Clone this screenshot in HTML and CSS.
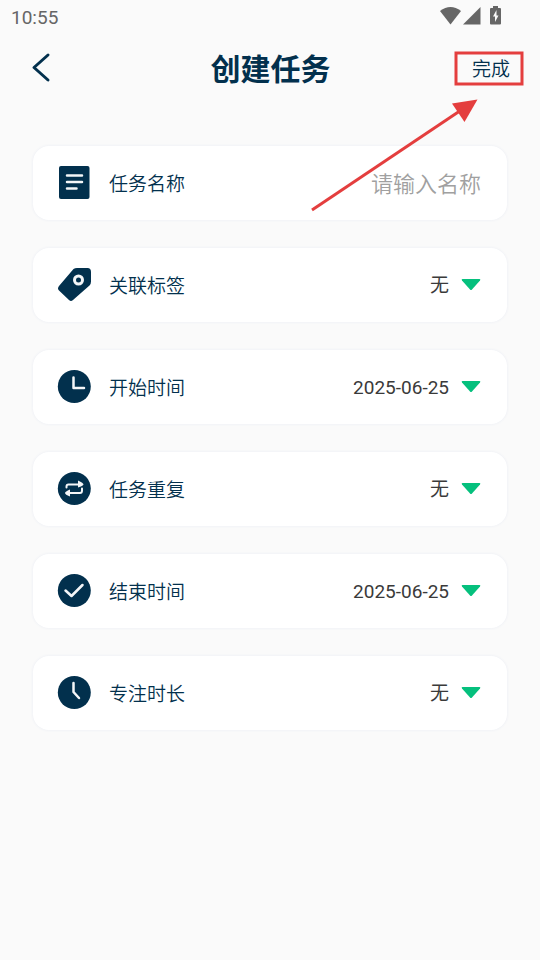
FILE: index.html
```html
<!DOCTYPE html>
<html lang="zh-CN">
<head>
<meta charset="utf-8">
<meta name="viewport" content="width=device-width, initial-scale=1">
<title>创建任务</title>
<link rel="stylesheet" href="styles.css">
</head>
<body>
<div class="status">
  <span>10:55</span>
  <svg class="status-icons" width="62" height="20" viewBox="0 0 62 20" aria-hidden="true">
    <path d="M0 4Q10.500-4 21 4L10.500 17.500Z"/>
    <path d="M23 17.500L40.500 0V17.500Z"/>
    <path d="M51 1h2V-1h5v2h2q1 0 1 1v14.500q0 1-1 1h-9q-1 0-1-1V2q0-1 1-1z"/>
    <path class="bolt" d="M56.500 3L53 9.500h2V15l3.500-6.500h-2z"/>
  </svg>
</div>
<header class="header">
  <button class="back" type="button" aria-label="返回">
    <svg width="20" height="30" viewBox="0 0 20 30"><path d="M17 2L3 14.500L17 27"/></svg>
  </button>
  <h1>创建任务</h1>
  <button class="done" type="submit" form="task">完成</button>
</header>
<form class="cards" id="task">
  <div class="card">
    <svg class="icon" viewBox="0 0 34 34"><rect x="2" y="0" width="30.500" height="33" rx="2"/><path class="line" d="M10 9.500h15M10 16h15M10 22.500h9.500"/></svg>
    <label for="name">任务名称</label>
    <input id="name" type="text" placeholder="请输入名称">
  </div>
  <div class="card">
    <svg class="icon" viewBox="0 0 34 34"><path d="M16.500 1Q18 0 20 0H30.500Q34 0 34 4V13.500Q34 16 32.500 17.500L16 32Q14 34 12 32L2 22.500Q0 20.500 2 18Z"/><circle class="ring" cx="21.500" cy="12" r="4"/></svg>
    <label for="tag">关联标签</label>
    <select id="tag"><option>无</option></select>
    <svg class="caret" viewBox="0 0 20 12"><path d="M1.500 0H18.500Q20 .2 19 1.500L11 10.500Q10 11.500 9 10.500L1 1.500Q0 .2 1.500 0Z"/></svg>
  </div>
  <div class="card">
    <svg class="icon" viewBox="0 0 34 34"><circle cx="17.300" cy="16.500" r="16.500"/><path class="line" d="M16.500 7.500V18H27"/></svg>
    <label for="start">开始时间</label>
    <select id="start"><option>2025-06-25</option></select>
    <svg class="caret" viewBox="0 0 20 12"><path d="M1.500 0H18.500Q20 .2 19 1.500L11 10.500Q10 11.500 9 10.500L1 1.500Q0 .2 1.500 0Z"/></svg>
  </div>
  <div class="card">
    <svg class="icon" viewBox="0 0 34 34"><circle cx="17.300" cy="16.500" r="16.500"/><path class="loop" d="M9.500 15.500V14.500Q9.500 12.500 11.500 12.500H21M25 16.500V18.500Q25 21 23 21H13"/><path class="tip" d="M21 8.500Q26.500 11 26.500 12.500Q26 14 21 15.500ZM13 17.500Q8 19.500 8 21Q8 22.500 13 24.500Z"/></svg>
    <label for="repeat">任务重复</label>
    <select id="repeat"><option>无</option></select>
    <svg class="caret" viewBox="0 0 20 12"><path d="M1.500 0H18.500Q20 .2 19 1.500L11 10.500Q10 11.500 9 10.500L1 1.500Q0 .2 1.500 0Z"/></svg>
  </div>
  <div class="card">
    <svg class="icon" viewBox="0 0 34 34"><circle cx="17.300" cy="16.500" r="16.500"/><path class="line" d="M8.500 16.500L14.500 22L25.500 11"/></svg>
    <label for="end">结束时间</label>
    <select id="end"><option>2025-06-25</option></select>
    <svg class="caret" viewBox="0 0 20 12"><path d="M1.500 0H18.500Q20 .2 19 1.500L11 10.500Q10 11.500 9 10.500L1 1.500Q0 .2 1.500 0Z"/></svg>
  </div>
  <div class="card">
    <svg class="icon" viewBox="0 0 34 34"><circle cx="17.300" cy="16.500" r="16.500"/><path class="line" d="M16.500 7V16L22 22"/></svg>
    <label for="focus">专注时长</label>
    <select id="focus"><option>无</option></select>
    <svg class="caret" viewBox="0 0 20 12"><path d="M1.500 0H18.500Q20 .2 19 1.500L11 10.500Q10 11.500 9 10.500L1 1.500Q0 .2 1.500 0Z"/></svg>
  </div>
</form>
<svg class="callout" width="230" height="170" viewBox="0 0 230 170" aria-hidden="true">
  <rect x="146" y="3" width="66" height="31"/>
  <path class="shaft" d="M2 160L152 59.500"/>
  <path class="head" d="M167.500 49.500L142 53.500L154.500 72Z"/>
</svg>
</body>
</html>
```
FILE: styles.css
```css
* {
  box-sizing: border-box;
}

body {
  position: relative;
  min-height: 100vh;
  margin: 0;
  background: #fafafa;
  color: #02304d;
  font-family: Roboto, "Noto Sans CJK SC", sans-serif;
  font-size: 19px;
}

button,
input,
select {
  margin: 0;
  padding: 0;
  border: 0;
  background: none;
  color: inherit;
  font: inherit;
}

svg {
  display: block;
  flex: none;
  overflow: visible;
}

.status {
  display: flex;
  align-items: center;
  justify-content: space-between;
  height: 34px;
  padding: 0 38px 0 11px;
  color: #666;
}

.status-icons {
  fill: #666;
}

.status-icons .bolt {
  fill: #fafafa;
}

.header {
  display: grid;
  grid-template-columns: 1fr auto 1fr;
  align-items: center;
  height: 68px;
  padding: 0 30px 0 31px;
}

.back {
  justify-self: start;
}

.back path {
  fill: none;
  stroke: #02304d;
  stroke-width: 3;
  stroke-linecap: round;
  stroke-linejoin: round;
}

h1 {
  margin: 0;
  padding-top: 4px;
  font-size: 30px;
  line-height: 40px;
  font-weight: 700;
}

.done {
  justify-self: end;
  font-family: "Noto Sans CJK SC", sans-serif;
  font-weight: 350;
  line-height: 24px;
}

.cards {
  display: flex;
  flex-direction: column;
  gap: 28px;
  padding: 44px 33px;
}

.card {
  display: flex;
  align-items: center;
  height: 74px;
  padding: 0 26px 0 24px;
  border-radius: 16px;
  background: #fff;
  box-shadow: 0 0 3px #e9ecf3;
}

.icon {
  width: 34px;
  height: 34px;
  margin-right: 18px;
  fill: #02304d;
}

.icon .line,
.icon .loop,
.icon .ring {
  fill: none;
  stroke: #f4f6f8;
  stroke-width: 3;
  stroke-linecap: round;
  stroke-linejoin: round;
}

.icon .line {
  stroke-width: 2.5;
}

.icon .loop {
  stroke-width: 2;
}

.icon .tip {
  fill: #f4f6f8;
}

.card label {
  flex: none;
  font-family: "Noto Sans CJK SC", sans-serif;
  font-weight: 350;
  line-height: 24px;
}

.card input,
.card select {
  flex: 1;
  min-width: 0;
  outline: 0;
}

.card input {
  padding-top: 2px;
  font-size: 22px;
  text-align: right;
}

.card input::placeholder {
  color: #a0a0a0;
  font-weight: 350;
}

.card select {
  appearance: none;
  color: #3a3a3a;
  text-align-last: right;
}

.caret {
  width: 20px;
  height: 12px;
  margin-left: 12px;
  fill: #05c07d;
}

.callout {
  position: absolute;
  top: 50px;
  right: 0;
  fill: none;
  stroke: #e43e3e;
  stroke-width: 3;
  pointer-events: none;
}

.callout .head {
  fill: #e43e3e;
  stroke: none;
}
```
